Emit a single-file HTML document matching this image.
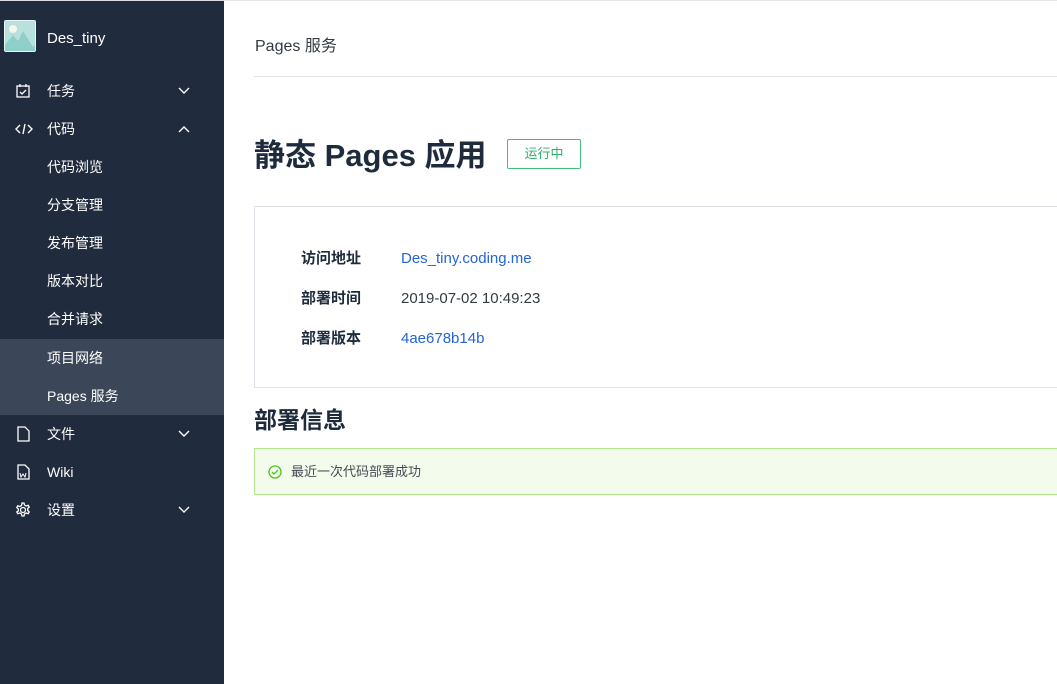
<!DOCTYPE html>
<html><head><meta charset="utf-8"><style>
*{margin:0;padding:0;box-sizing:border-box}
body{width:1057px;height:684px;overflow:hidden;background:#fff;font-family:"Liberation Sans","Noto Sans CJK SC",sans-serif;position:relative}
.sb{position:absolute;left:0;top:0;width:224px;height:684px;background:#202b3d;color:#fff;border-top:1px solid #d8dbe0}
.logo{position:absolute;left:4px;top:19px;width:32px;height:32px;background:#b8e0df;border:1px solid #e8f3f3;border-radius:2px;overflow:hidden}
.name{position:absolute;left:47px;top:29px;font-size:15px}
.it{position:absolute;left:0;width:224px;height:38px;font-size:14px;line-height:38px}
.it span{position:absolute;left:47px}
.it svg.ic{position:absolute;left:15px;top:11px}
.it svg.ch{position:absolute;left:178px;top:15px}
.hl{background:#3b4759}
.main{position:absolute;left:224px;top:0;right:0;height:684px;border-top:1px solid #e6e6e6}
.t{position:absolute;left:31px;top:31px;font-size:16px;color:#323a45}
.hr{position:absolute;left:30px;right:0;top:75px;border-top:1px solid #dfe2e6}
h1{position:absolute;left:30px;top:129px;font-size:31px;color:#1f2b3d;font-weight:bold}
.badge{position:absolute;left:283px;top:138px;width:74px;height:30px;border:1px solid #3fbf7a;color:#2fb06a;font-size:13px;text-align:center;line-height:28px;border-radius:2px}
.card{position:absolute;left:30px;top:205px;right:-2px;height:182px;border:1px solid #dfe2e6}
.r{position:absolute;left:46px;font-size:15px}
.r b{color:#1f2b3d;display:inline-block;width:100px}
.lk{color:#2563d8}
h2{position:absolute;left:30px;top:400px;font-size:23px;color:#1f2b3d;font-weight:bold}
.ok{position:absolute;left:30px;top:447px;right:-2px;height:47px;border:1px solid #b3e68e;background:#f3fbec;font-size:13px;color:#444b55;line-height:45px;padding-left:36px}
.ok svg{position:absolute;left:13px;top:16px}
</style></head><body>
<div class="sb">
<div class="logo"><svg width="32" height="32"><circle cx="8" cy="8" r="4" fill="#f4f8e8"/><path d="M0 32 L0 24 L8 14 L13 20 L18 10 L28 26 L32 22 L32 32Z" fill="#8fcfc9"/></svg></div>
<div class="name">Des_tiny</div>
<div class="it" style="top:71px"><svg class="ic" width="16" height="16" fill="none" stroke="#fff" stroke-width="1.3"><rect x="2" y="3" width="12" height="11"/><path d="M5 1v3M11 1v3M5 9l2 2 4-4"/></svg><span>任务</span><svg class="ch" width="12" height="8" fill="none" stroke="#fff" stroke-width="1.4"><path d="M1 1l5 5 5-5"/></svg></div>
<div class="it" style="top:109px"><svg class="ic" width="18" height="16" fill="none" stroke="#fff" stroke-width="1.4"><path d="M5 4L1 8l4 4M13 4l4 4-4 4M10 3L8 13"/></svg><span>代码</span><svg class="ch" width="12" height="8" fill="none" stroke="#fff" stroke-width="1.4"><path d="M1 7l5-5 5 5"/></svg></div>
<div class="it" style="top:147px"><span>代码浏览</span></div>
<div class="it" style="top:185px"><span>分支管理</span></div>
<div class="it" style="top:223px"><span>发布管理</span></div>
<div class="it" style="top:261px"><span>版本对比</span></div>
<div class="it" style="top:299px"><span>合并请求</span></div>
<div class="it hl" style="top:338px"><span>项目网络</span></div>
<div class="it hl" style="top:376px"><span>Pages 服务</span></div>
<div class="it" style="top:414px"><svg class="ic" width="16" height="16" fill="none" stroke="#fff" stroke-width="1.3"><path d="M3 1h7l4 4v10H3z"/></svg><span>文件</span><svg class="ch" width="12" height="8" fill="none" stroke="#fff" stroke-width="1.4"><path d="M1 1l5 5 5-5"/></svg></div>
<div class="it" style="top:452px"><svg class="ic" width="16" height="16" fill="none" stroke="#fff" stroke-width="1.3"><path d="M3 1h7l4 4v10H3z"/><path d="M5 9l1 4 2-3 2 3 1-4" stroke-width="1"/></svg><span>Wiki</span></div>
<div class="it" style="top:490px"><svg class="ic" width="16" height="16" fill="none" stroke="#fff" stroke-width="1.3"><circle cx="8" cy="8" r="2.5"/><path d="M7 1h2l.5 2 1.7 1 2-.7 1 1.7-1.5 1.5v2l1.5 1.5-1 1.7-2-.7-1.7 1-.5 2H7l-.5-2-1.7-1-2 .7-1-1.7L3.3 9V7L1.8 5.5l1-1.7 2 .7 1.7-1z"/></svg><span>设置</span><svg class="ch" width="12" height="8" fill="none" stroke="#fff" stroke-width="1.4"><path d="M1 1l5 5 5-5"/></svg></div>
</div>
<div class="main">
<div class="t">Pages 服务</div>
<div class="hr"></div>
<h1>静态 Pages 应用</h1>
<div class="badge">运行中</div>
<div class="card">
<div class="r" style="top:40px"><b>访问地址</b><span class="lk">Des_tiny.coding.me</span></div>
<div class="r" style="top:80px"><b>部署时间</b><span style="color:#323a45">2019-07-02 10:49:23</span></div>
<div class="r" style="top:120px"><b>部署版本</b><span class="lk">4ae678b14b</span></div>
</div>
<h2>部署信息</h2>
<div class="ok"><svg width="14" height="14" fill="none" stroke="#52c41a" stroke-width="1.3"><circle cx="7" cy="7" r="6"/><path d="M4 7l2 2 4-4"/></svg>最近一次代码部署成功</div>
</div>
</body></html>
